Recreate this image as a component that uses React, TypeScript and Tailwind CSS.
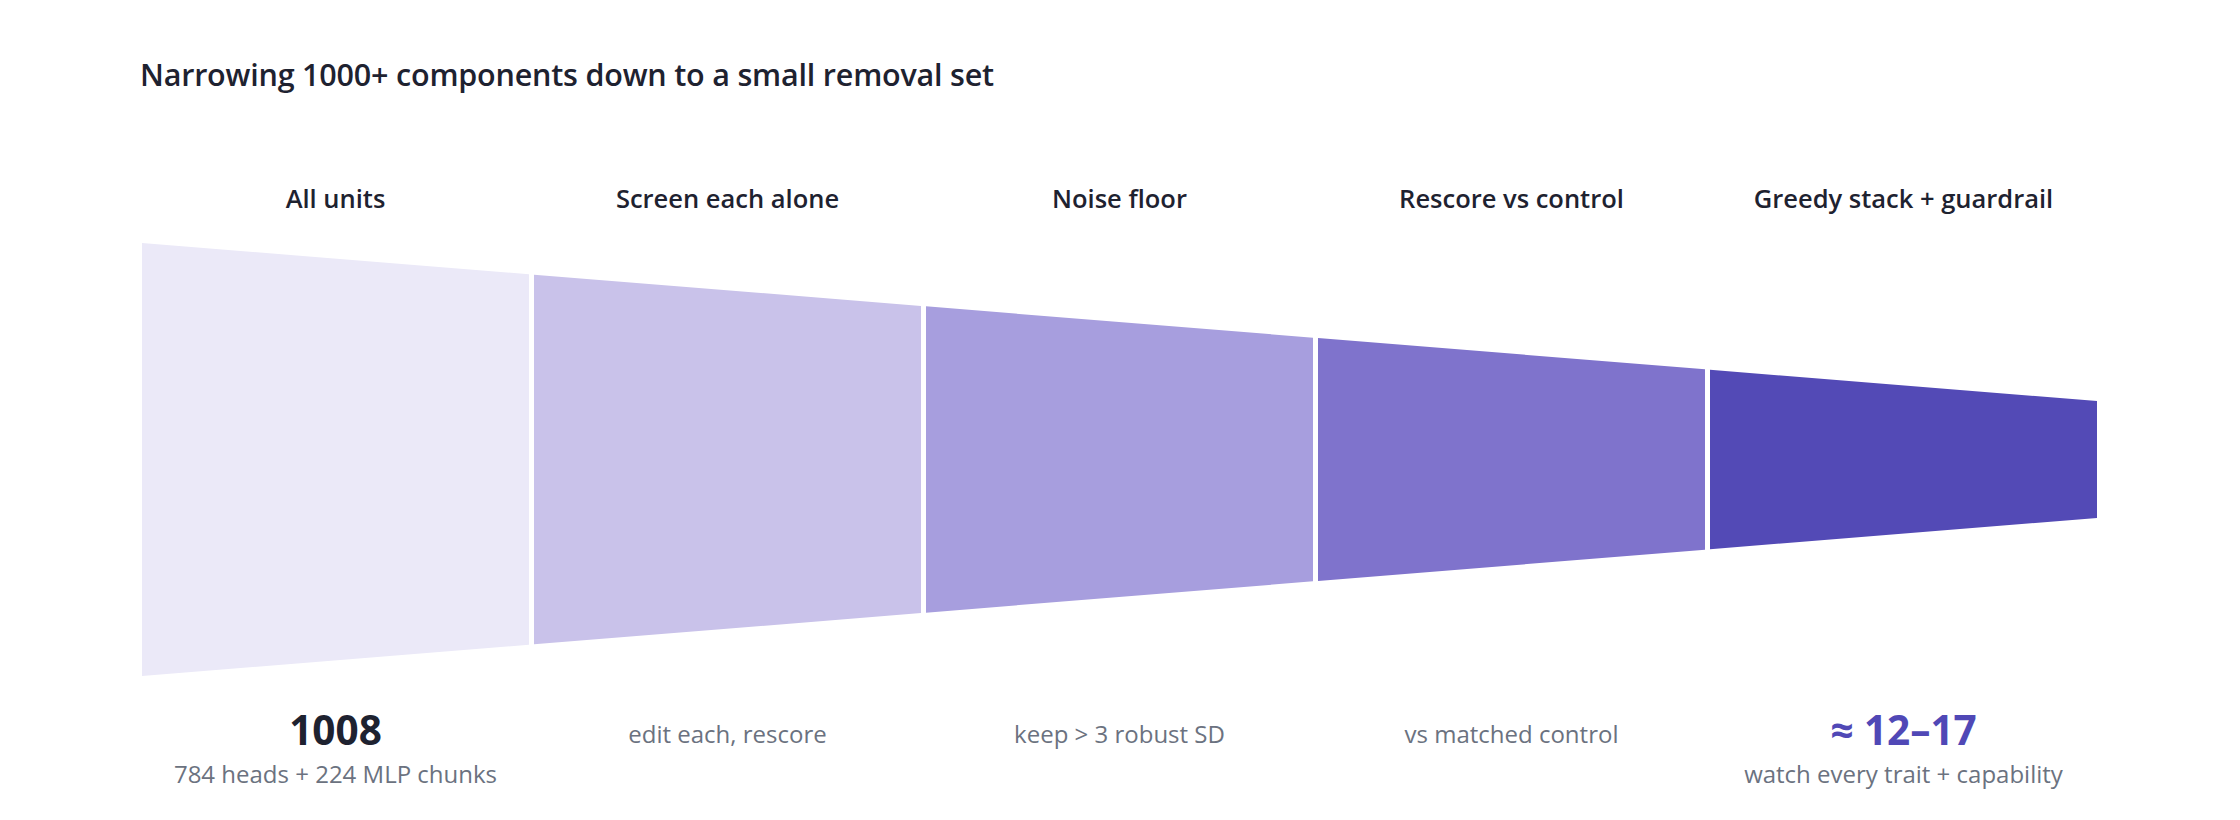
import React from 'react';

type Stage = {
	label: string;
	fill: string;
	value?: string;
	valueClass?: string;
	note: string;
};

const stages: Stage[] = [
	{ label: 'All units', fill: '#ebe9f8', value: '1008', valueClass: 'text-[#1e2230]', note: '784 heads + 224 MLP chunks' },
	{ label: 'Screen each alone', fill: '#c9c2ea', note: 'edit each, rescore' },
	{ label: 'Noise floor', fill: '#a79ede', note: 'keep > 3 robust SD' },
	{ label: 'Rescore vs control', fill: '#7f73cc', note: 'vs matched control' },
	{ label: 'Greedy stack + guardrail', fill: '#534ab6', value: '≈ 12–17', valueClass: 'text-[#5048b6]', note: 'watch every trait + capability' },
];

const W = 1955;
const H = 433;
const SEG = 387;
const GAP = 5;
const DROP = 158;

function Funnel() {
	const top = (x: number) => (DROP * x) / W;
	const bot = (x: number) => H - (DROP * x) / W;
	return (
		<svg viewBox={`0 0 ${W} ${H}`} width={W} height={H} className="block">
			{stages.map((s, i) => {
				const x0 = i * (SEG + GAP);
				const x1 = x0 + SEG;
				const pts = `${x0},${top(x0)} ${x1},${top(x1)} ${x1},${bot(x1)} ${x0},${bot(x0)}`;
				return <polygon key={s.label} points={pts} fill={s.fill} />;
			})}
		</svg>
	);
}

export default function App() {
	return (
		<div
			className="h-[820px] w-full bg-white px-[142px] pt-[54px] text-[#1e2230]"
			style={{ fontFamily: '"Open Sans", "Noto Sans", sans-serif' }}
		>
			<h1 className="-ml-[2px] text-[30.5px] font-semibold leading-[40px] tracking-[-0.2px]">
				Narrowing 1000+ components down to a small removal set
			</h1>

			<div className="mt-[88px] grid w-[1955px] grid-cols-5 gap-x-[5px]">
				{stages.map((s) => (
					<div key={s.label} className="text-center text-[25.5px] font-semibold leading-[32px]">
						{s.label}
					</div>
				))}
			</div>

			<div className="mt-[29px]">
				<Funnel />
			</div>

			<div className="mt-[30px] grid w-[1955px] grid-cols-5 gap-x-[5px]">
				{stages.map((s) => (
					<div key={s.label} className="flex flex-col items-center text-center">
						{s.value ? (
							<>
								<div className={`text-[40.5px] font-bold leading-[48px] ${s.valueClass}`}>{s.value}</div>
								<div className="mt-[5px] text-[24px] leading-[30px] text-[#6b7280]">{s.note}</div>
							</>
						) : (
							<div className="pt-[12px] text-[24px] leading-[32px] text-[#6b7280]">{s.note}</div>
						)}
					</div>
				))}
			</div>
		</div>
	);
}
